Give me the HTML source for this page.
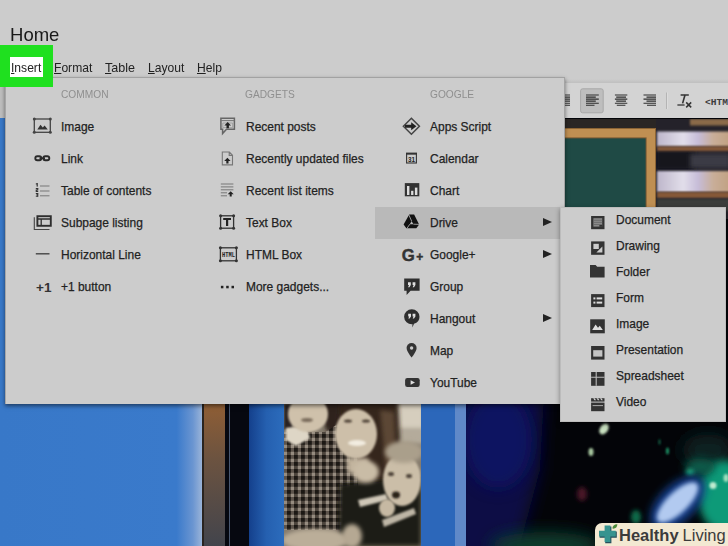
<!DOCTYPE html>
<html><head><meta charset="utf-8">
<style>
html,body{margin:0;padding:0;}
body{width:728px;height:546px;overflow:hidden;position:relative;background:#cccccc;font-family:"Liberation Sans",Arial,sans-serif;color:#222;}
#bg{position:absolute;left:0;top:0;width:728px;height:546px;}
.abs{position:absolute;}
#title{left:10px;top:23px;font-size:19px;line-height:24px;color:#1a1a1a;transform-origin:0 0;transform:scaleX(.975);}
#green{z-index:5;left:0;top:45px;width:53px;height:42px;background:#1fe01f;}
#white{z-index:6;left:10px;top:57px;width:33px;height:20px;background:#fff;}
.mi{top:60px;font-size:13px;line-height:15px;color:#222;transform-origin:0 0;transform:scaleX(.93);}
.mi u{text-decoration:underline;}
#mline{left:53px;top:77px;width:512px;height:1px;background:#a2a2a2;z-index:3;}
#panel{left:5px;top:77px;width:560px;height:327px;background:#cccccc;box-shadow:0 2px 4px rgba(0,0,0,.5);border-left:1px solid #a6a6a6;border-right:1px solid #a4a4a4;box-sizing:border-box;}
.hd{font-size:11px;color:#8f8f8f;top:88px;line-height:13px;transform-origin:0 0;transform:scaleX(.925);}
.it{font-size:13px;line-height:16px;color:#222;-webkit-text-stroke:0.25px #222;white-space:nowrap;transform-origin:0 0;transform:translateY(0.7px) scaleX(.92);}
.it.s{transform:translateY(0.2px) scaleX(.92);}
#hl{left:375px;top:207px;width:186px;height:32px;background:#b9b9b9;}
#sub{left:560px;top:207px;width:165.5px;height:214.6px;background:#cccccc;box-shadow:0 2px 5px rgba(0,0,0,.4);border:1px solid #bcbcbc;box-sizing:border-box;}
.arr{width:0;height:0;border-left:9px solid #222;border-top:4.5px solid transparent;border-bottom:4.5px solid transparent;}
#toolbar{left:565px;top:79px;width:163px;height:39px;background:linear-gradient(to bottom,#cccccc 0,#c1c1c1 3.5px,#d3d3d3 4px,#d3d3d3 100%);}
#wm{left:595px;top:523px;width:133px;height:23px;background:#f3e9d2;border-top-left-radius:7px;}
#wm span{position:absolute;top:1.5px;font-size:16.5px;line-height:20px;color:#3b3b3b;white-space:nowrap;}
svg.ic{position:absolute;overflow:visible;z-index:4;pointer-events:none;}
</style></head><body>
<svg id="bg" viewBox="0 0 728 546">
<defs>
<linearGradient id="gBlueL" x1="0" x2="1" y1="0" y2="0">
<stop offset="0" stop-color="#3878c8"/><stop offset="0.87" stop-color="#3a7acb"/><stop offset="0.95" stop-color="#6a95d1"/><stop offset="1" stop-color="#9fb7d9"/>
</linearGradient>
<linearGradient id="gBrown" gradientUnits="userSpaceOnUse" x1="0" x2="0" y1="400" y2="546">
<stop offset="0" stop-color="#925f34"/><stop offset="0.4" stop-color="#6c5340"/><stop offset="1" stop-color="#42444c"/>
</linearGradient>
<linearGradient id="gBlueM" x1="0" x2="1" y1="0" y2="0">
<stop offset="0" stop-color="#14408c"/><stop offset="0.5" stop-color="#2560b0"/><stop offset="1" stop-color="#2c6cbc"/>
</linearGradient>
<linearGradient id="gShelf" x1="0" x2="1" y1="0" y2="0">
<stop offset="0" stop-color="#bdb6ca"/><stop offset="0.35" stop-color="#e2deea"/><stop offset="0.55" stop-color="#c6bcd8"/><stop offset="0.75" stop-color="#c9ae98"/><stop offset="1" stop-color="#c0a080"/>
</linearGradient>
<pattern id="plaid" width="7" height="7" patternUnits="userSpaceOnUse">
<rect width="7" height="7" fill="#968c80"/><rect width="3.8" height="7" fill="#4c443c"/><rect width="7" height="3.8" fill="#4c443c" opacity=".8"/><rect width="3.8" height="3.8" fill="#1c1814"/>
</pattern>
<filter id="b1" x="-50%" y="-50%" width="200%" height="200%"><feGaussianBlur stdDeviation="1"/></filter>
<filter id="b2" x="-50%" y="-50%" width="200%" height="200%"><feGaussianBlur stdDeviation="2"/></filter>
<filter id="b4" x="-50%" y="-50%" width="200%" height="200%"><feGaussianBlur stdDeviation="4"/></filter>
<filter id="b8" x="-50%" y="-50%" width="200%" height="200%"><feGaussianBlur stdDeviation="8"/></filter>
<clipPath id="cFam"><rect x="284" y="118" width="137" height="428"/></clipPath>
<clipPath id="cDark"><rect x="466" y="118" width="262" height="428"/></clipPath>
<clipPath id="cTop"><rect x="565" y="119" width="163" height="100"/></clipPath>
</defs>
<!-- left blue -->
<rect x="0" y="118" width="203" height="428" fill="url(#gBlueL)"/>
<rect x="202" y="118" width="2" height="428" fill="#2a2420"/>
<rect x="204" y="118" width="21" height="428" fill="url(#gBrown)"/>
<rect x="225" y="118" width="24" height="428" fill="#060810"/>
<rect x="229" y="118" width="1" height="428" fill="#4a5870"/>
<rect x="249" y="118" width="35" height="428" fill="url(#gBlueM)"/>
<!-- family photo -->
<g clip-path="url(#cFam)">
<rect x="284" y="118" width="137" height="428" fill="#857b6d"/>
<rect x="394" y="398" width="30" height="34" fill="#d6cebe" filter="url(#b2)"/>
<rect x="396" y="428" width="28" height="16" fill="#b4ab9b" filter="url(#b2)"/>
<path d="M328 400 L398 400 L400 440 L398 474 L382 492 L350 478 L336 452 L328 425Z" fill="#35281f" filter="url(#b2)"/>
<path d="M380 410 L394 412 L396 460 L386 470Z" fill="#5c4636" filter="url(#b2)"/>
<path d="M284 404 L294 404 L292 428 L284 430Z" fill="#2a2420" filter="url(#b1)"/>
<path d="M322 400 L340 400 L338 432 L326 430Z" fill="#2e241c" filter="url(#b2)"/>
<rect x="284" y="432" width="74" height="98" fill="url(#plaid)"/>
<path d="M306 444 L338 424 L354 468 L358 530 L320 530Z" fill="url(#plaid)"/>
<path d="M286 428 L306 426 L310 438 L296 446 L286 440Z" fill="#ded6c6" filter="url(#b1)"/>
<ellipse cx="308" cy="414" rx="20" ry="18" fill="#cfc1ab" filter="url(#b1)"/>
<ellipse cx="307" cy="420" rx="6" ry="2" fill="#7a6c5c" filter="url(#b1)"/>
<ellipse cx="356" cy="434" rx="21" ry="25" fill="#cdbfa9" filter="url(#b1)"/>
<path d="M346 458 L368 458 L372 472 L348 474Z" fill="#c2b49e" filter="url(#b2)"/>
<ellipse cx="357" cy="443" rx="9" ry="3" fill="#f2ece0" filter="url(#b1)"/>
<ellipse cx="348" cy="421" rx="4" ry="1.6" fill="#4a3c30" filter="url(#b1)"/><ellipse cx="366" cy="421" rx="4" ry="1.6" fill="#4a3c30" filter="url(#b1)"/>
<path d="M340 484 L421 476 L421 546 L338 546Z" fill="#1f1c19" filter="url(#b2)"/>
<path d="M358 500 L386 494 L388 500 L360 507Z" fill="#cfc7b7" filter="url(#b1)"/>
<path d="M382 520 L414 508 L416 514 L384 527Z" fill="#bdb5a5" filter="url(#b1)"/>
<ellipse cx="402" cy="480" rx="19" ry="26" fill="#cbbea8" filter="url(#b1)"/>
<ellipse cx="404" cy="452" rx="19" ry="11" fill="#aa9f8b" filter="url(#b2)"/>
<ellipse cx="396" cy="495" rx="4" ry="3.4" fill="#2c2018" filter="url(#b1)"/>
<ellipse cx="391" cy="474" rx="3" ry="2" fill="#4a4034" filter="url(#b1)"/><ellipse cx="409" cy="476" rx="3" ry="2" fill="#4a4034" filter="url(#b1)"/>
<ellipse cx="366" cy="472" rx="13" ry="11" fill="#c9bca6" filter="url(#b2)"/>
<ellipse cx="387" cy="508" rx="8" ry="9" fill="#c6b9a3" filter="url(#b1)"/>
<ellipse cx="316" cy="540" rx="34" ry="11" fill="#bbae99" filter="url(#b2)"/>
<ellipse cx="352" cy="536" rx="10" ry="12" fill="#b5a893" filter="url(#b2)"/>
</g>
<!-- right blue -->
<rect x="421" y="118" width="34" height="428" fill="#2c67ba"/>
<rect x="455" y="118" width="11" height="428" fill="#6089c8"/>
<!-- dark scene -->
<g clip-path="url(#cDark)">
<rect x="466" y="118" width="262" height="428" fill="#030408"/>
<path d="M450 380 L545 380 L540 470 L516 560 L450 560Z" fill="#080c44" filter="url(#b8)"/>
<ellipse cx="498" cy="440" rx="34" ry="48" fill="#0b1266" filter="url(#b8)" opacity=".85"/>
<ellipse cx="545" cy="546" rx="55" ry="14" fill="#0a3e2e" filter="url(#b8)"/>
<ellipse cx="708" cy="450" rx="26" ry="16" fill="#0a2422" filter="url(#b8)"/>
<ellipse cx="724" cy="496" rx="26" ry="36" fill="#0f9a78" filter="url(#b4)"/>
<ellipse cx="700" cy="467" rx="15" ry="9" fill="#0a5a48" filter="url(#b4)"/>
<ellipse cx="690" cy="472" rx="4" ry="3" fill="#22b080" filter="url(#b2)"/>
<ellipse cx="636" cy="517" rx="5" ry="7" fill="#0a6a48" filter="url(#b2)"/>
<ellipse cx="677.5" cy="503" rx="18" ry="34" transform="rotate(46 677.5 503)" fill="#123f8c" filter="url(#b4)"/>
<ellipse cx="677.5" cy="502.5" rx="10.5" ry="27" transform="rotate(46 677.5 502.5)" fill="#b2caf0" filter="url(#b2)"/>
<ellipse cx="713" cy="485.5" rx="3.5" ry="3.5" fill="#c0ecd0" filter="url(#b1)"/>
<ellipse cx="726" cy="478" rx="2.5" ry="4" fill="#a0e0c0" filter="url(#b1)"/>
<ellipse cx="667.5" cy="451" rx="1.6" ry="3.6" fill="#1a8a60" filter="url(#b1)"/>
<ellipse cx="659.5" cy="442" rx="1.2" ry="3" fill="#145a40" filter="url(#b1)"/>
<ellipse cx="604" cy="429" rx="4" ry="6" transform="rotate(35 604 429)" fill="#c8e0c0" filter="url(#b1)"/>
<ellipse cx="591" cy="452" rx="2.5" ry="4" fill="#a8c8a0" filter="url(#b1)"/>
<ellipse cx="582" cy="494" rx="5" ry="7" fill="#4a1828" filter="url(#b2)"/>
</g>
<!-- top right: chalkboard and shelves -->
<g clip-path="url(#cTop)">
<rect x="565" y="118.6" width="163" height="100" fill="#2a2624"/>
<rect x="656" y="119" width="72" height="100" fill="#24222a"/>
<rect x="656" y="150" width="40" height="20" fill="#16161c" filter="url(#b2)"/>
<rect x="690" y="154" width="40" height="14" fill="#3a3a44" filter="url(#b2)"/>
<rect x="657" y="131.5" width="75" height="15" fill="url(#gShelf)" filter="url(#b1)"/>
<rect x="657" y="171" width="75" height="21" fill="url(#gShelf)" filter="url(#b1)"/>
<rect x="657" y="146.5" width="75" height="4.5" fill="#855838" filter="url(#b1)"/>
<rect x="657" y="192" width="75" height="6" fill="#855838" filter="url(#b1)"/>
<rect x="657" y="199" width="75" height="12" fill="#3a3c3a" filter="url(#b1)"/>
<rect x="690" y="119" width="40" height="6.5" fill="#8a6a48" filter="url(#b1)"/>
<rect x="565" y="128" width="91" height="92" fill="#8c6434"/>
<rect x="565" y="129" width="90" height="92" fill="#bf8f52"/>
<rect x="565" y="137.4" width="81.6" height="84" fill="#7a5a34"/>
<rect x="565" y="138.4" width="80.6" height="82" fill="#1f4a45"/>
</g>
</svg>
<div class="abs" id="title">Home</div>
<div class="abs" id="green"></div><div class="abs" id="white"></div>
<div class="abs mi" style="left:11px;z-index:7"><u>I</u>nsert</div>
<div class="abs mi" style="left:54.4px"><u>F</u>ormat</div>
<div class="abs mi" style="left:105px;transform:scaleX(.965)"><u>T</u>able</div>
<div class="abs mi" style="left:148px"><u>L</u>ayout</div>
<div class="abs mi" style="left:197px"><u>H</u>elp</div>
<div class="abs" id="mline"></div>
<div class="abs" id="toolbar"></div><div class="abs" style="left:0;top:83px;width:6px;height:35px;background:#bebebe"></div>
<div class="abs" id="panel"></div>
<div class="abs" id="hl"></div>
<div class="abs" id="sub"></div>
<div class="abs hd" style="left:61px">COMMON</div>
<div class="abs hd" style="left:245px">GADGETS</div>
<div class="abs hd" style="left:430px">GOOGLE</div>
<!-- col1 -->
<div class="abs it" style="left:61px;top:118px">Image</div>
<div class="abs it" style="left:61px;top:150px">Link</div>
<div class="abs it" style="left:61px;top:182px">Table of contents</div>
<div class="abs it" style="left:61px;top:214px">Subpage listing</div>
<div class="abs it" style="left:61px;top:246px">Horizontal Line</div>
<div class="abs it" style="left:61px;top:278px">+1 button</div>
<!-- col2 -->
<div class="abs it" style="left:245.8px;top:118px">Recent posts</div>
<div class="abs it" style="left:245.8px;top:150px">Recently updated files</div>
<div class="abs it" style="left:245.8px;top:182px">Recent list items</div>
<div class="abs it" style="left:245.8px;top:214px">Text Box</div>
<div class="abs it" style="left:245.8px;top:246px">HTML Box</div>
<div class="abs it" style="left:245.8px;top:278px">More gadgets...</div>
<!-- col3 -->
<div class="abs it" style="left:430px;top:118px">Apps Script</div>
<div class="abs it" style="left:430px;top:150px">Calendar</div>
<div class="abs it" style="left:430px;top:182px">Chart</div>
<div class="abs it" style="left:430px;top:214px">Drive</div>
<div class="abs it" style="left:430px;top:246px">Google+</div>
<div class="abs it" style="left:430px;top:278px">Group</div>
<div class="abs it" style="left:430px;top:310px">Hangout</div>
<div class="abs it" style="left:430px;top:342px">Map</div>
<div class="abs it" style="left:430px;top:374px">YouTube</div>
<div class="abs arr" style="left:543px;top:218px"></div>
<div class="abs arr" style="left:543px;top:250px"></div>
<div class="abs arr" style="left:543px;top:314px"></div>
<!-- submenu -->
<div class="abs it s" style="left:616px;top:212px">Document</div>
<div class="abs it s" style="left:616px;top:238px">Drawing</div>
<div class="abs it s" style="left:616px;top:264px">Folder</div>
<div class="abs it s" style="left:616px;top:290px">Form</div>
<div class="abs it s" style="left:616px;top:316px">Image</div>
<div class="abs it s" style="left:616px;top:342px">Presentation</div>
<div class="abs it s" style="left:616px;top:368px">Spreadsheet</div>
<div class="abs it s" style="left:616px;top:394px">Video</div>

<svg class="ic" id="icons" style="left:0;top:0" width="728" height="546" viewBox="0 0 728 546">
<g id="toolbar-icons">
<rect x="580.6" y="88.8" width="22.6" height="24" rx="2" fill="#bebebe" stroke="#a8a8a8" stroke-width="1"/>
<g stroke="#2e2e2e" stroke-width="1.15">
<path d="M565.0 95.00 H570.0 M565.0 97.05 H570.0 M565.0 99.10 H570.0 M565.0 101.15 H570.0 M565.0 103.20 H570.0 M565.0 105.25 H570.0"/>
<path d="M586.0 95.00 H598.8 M586.0 97.05 H595.8 M586.0 99.10 H598.8 M586.0 101.15 H595.8 M586.0 103.20 H598.8 M586.0 105.25 H594.5"/>
<path d="M614.9 95.00 H627.3 M616.2 97.05 H626.0 M614.9 99.10 H627.3 M616.2 101.15 H626.0 M614.9 103.20 H627.3 M616.8 105.25 H625.4"/>
<path d="M643.5 95.00 H656.0 M646.5 97.05 H656.0 M643.5 99.10 H656.0 M646.5 101.15 H656.0 M643.5 103.20 H656.0 M647.0 105.25 H656.0"/>
</g>
<path d="M666.5 92.5 V109" stroke="#b4b4b4" stroke-width="1"/><path d="M667.5 92.5 V109" stroke="#dcdcdc" stroke-width="1"/>
<g stroke="#333" fill="none">
<path d="M680.6 95 H688.8" stroke-width="1.5"/><path d="M685 95 L682.6 103.4" stroke-width="1.6"/><path d="M677.4 105 H684.6" stroke-width="1.3"/>
<path d="M686.2 102.4 L691.2 107.4 M691.2 102.4 L686.2 107.4" stroke-width="1.5"/>
</g>
<text x="705" y="105" font-family="Liberation Mono, monospace" font-weight="bold" font-size="8.5" fill="#3c3c3c" textLength="34.5" lengthAdjust="spacingAndGlyphs">&lt;HTML&gt;</text>
</g>
<g id="wm-icon">
<path d="M605.2 526.6 H611.4 V531.6 H616.8 V537.8 H611.4 V543.2 H605.2 V537.8 H599.6 V531.6 H605.2Z" fill="#274f5c"/>
<path d="M604.6 525.6 H610.4 V530.8 H615.8 V536.6 H610.4 V542 H604.6 V536.6 H599 V530.8 H604.6Z" fill="#37938f"/>
<path d="M612.4 528.6 C612.4 525.6 614.6 524 617.4 524.2 C617.2 527 615.6 529 612.4 528.6Z" fill="#4a8a3a"/>
</g>
<!-- col 1 -->
<g id="i-image" stroke="#444" fill="none" stroke-width="1.3">
<rect x="34.3" y="119" width="16" height="13.3"/>
<g fill="#444" stroke="none"><circle cx="34.3" cy="119" r="1.5"/><circle cx="50.3" cy="119" r="1.5"/><circle cx="34.3" cy="132.3" r="1.5"/><circle cx="50.3" cy="132.3" r="1.5"/>
<path d="M37.3 129.6 L40.5 124.8 L42.8 127.6 L44.6 125.6 L47.8 129.6Z" fill="#333"/></g>
</g>
<g id="i-link" stroke="#2a2a2a" fill="none" stroke-width="1.9">
<rect x="35.3" y="156.2" width="6" height="4" rx="2"/><rect x="43.3" y="156.2" width="6" height="4" rx="2"/>
<path d="M39.5 158.2 H45" stroke-width="1.6"/>
</g>
<g id="i-toc">
<g stroke="#777" stroke-width="1"><path d="M40 186 H49.5 M40 191 H49.5 M40 195.8 H49.5"/></g>
<g fill="#333"><rect x="36.6" y="183" width="1.2" height="3.6"/><rect x="35.8" y="183.4" width="1.2" height="1"/>
<rect x="35.8" y="188" width="2.4" height="1"/><rect x="37.2" y="188" width="1" height="2"/><rect x="35.8" y="189.6" width="2.4" height="1"/><rect x="35.8" y="189.6" width="1" height="2"/><rect x="35.8" y="191" width="2.4" height="1"/>
<rect x="35.8" y="193" width="2.4" height="1"/><rect x="37.2" y="193" width="1" height="3.6"/><rect x="36.2" y="194.4" width="2" height="0.9"/><rect x="35.8" y="195.7" width="2.4" height="1"/></g>
</g>
<g id="i-subpage" fill="none">
<path d="M34.3 217.3 V229.5 H49.5" stroke="#444" stroke-width="1.1"/>
<rect x="37.4" y="216.2" width="13.4" height="9.6" stroke="#2e2e2e" stroke-width="1.9"/>
<path d="M37.4 219 H50.8 M41.2 219 V225.8" stroke="#2e2e2e" stroke-width="1.3"/>
</g>
<path id="i-hline" d="M35.8 253.8 H49.5" stroke="#444" stroke-width="1.4"/>
<text id="i-plus1" x="36" y="291.6" font-family="Liberation Sans, Arial, sans-serif" font-weight="bold" font-size="13.5" fill="#333" textLength="15.5" lengthAdjust="spacingAndGlyphs">+1</text>
<!-- col 2 -->
<g id="i-posts">
<path d="M220.9 118.3 H234.4 V129.3 H226.5 L222.6 133.6 V129.3 H220.9Z" fill="none" stroke="#666" stroke-width="1.5"/>
<path d="M221 120.6 H234.4" stroke="#777" stroke-width="1"/>
<path d="M222.8 123 H232.6 V127.6 H222.8Z" fill="none" stroke="#999" stroke-width=".8"/>
<path d="M227.7 122 L231 125.4 H228.9 V128.2 H226.5 V125.4 H224.4Z" fill="#222"/>
</g>
<g id="i-files">
<path d="M222.3 152 H229.4 L232.5 155.2 V164.9 H222.3Z M229.2 152 V155.4 H232.5" fill="none" stroke="#777" stroke-width="1.1"/>
<path d="M227.4 157.8 L230.6 161 H228.5 V163.6 H226.3 V161 H224.2Z" fill="#222"/>
</g>
<g id="i-list">
<path d="M220.8 184 H233.4 M220.8 186.9 H233.4 M220.8 189.8 H233.4 M220.8 192.8 H227 M220.8 195.8 H227" stroke="#777" stroke-width="1"/>
<path d="M230.7 191.2 L233.7 194.3 H231.7 V196.4 H229.7 V194.3 H227.7Z" fill="#222"/>
</g>
<g id="i-textbox">
<rect x="220.6" y="215.8" width="13" height="12.4" fill="none" stroke="#333" stroke-width="1.3"/>
<g fill="#333"><circle cx="220.6" cy="215.8" r="1.5"/><circle cx="233.6" cy="215.8" r="1.5"/><circle cx="220.6" cy="228.2" r="1.5"/><circle cx="233.6" cy="228.2" r="1.5"/>
<path d="M223.2 217.9 H231 V219.9 H228.2 V226 H226 V219.9 H223.2Z" fill="#222"/></g>
</g>
<g id="i-htmlbox">
<rect x="220.4" y="247.8" width="16" height="13" fill="none" stroke="#333" stroke-width="1.3"/>
<g fill="#333"><circle cx="220.4" cy="247.8" r="1.5"/><circle cx="236.4" cy="247.8" r="1.5"/><circle cx="220.4" cy="260.8" r="1.5"/><circle cx="236.4" cy="260.8" r="1.5"/></g>
<text x="222" y="257" font-family="Liberation Mono, monospace" font-weight="bold" font-size="6.5" fill="#222" textLength="13" lengthAdjust="spacingAndGlyphs">HTML</text>
</g>
<g id="i-more" fill="#222"><rect x="220.9" y="285.8" width="2.5" height="2.5"/><rect x="226.2" y="285.8" width="2.5" height="2.5"/><rect x="231.5" y="285.8" width="2.5" height="2.5"/></g>
<!-- col 3 -->
<g id="i-script">
<path d="M411.4 118.2 L419.4 126.2 L411.4 134.2 L403.4 126.2Z" fill="none" stroke="#444" stroke-width="1.5"/>
<path d="M405 124.7 H411.2 V122.2 L416.4 126.2 L411.2 130.2 V127.7 H405Z" fill="#222"/>
</g>
<g id="i-cal">
<rect x="406.6" y="153.6" width="9.8" height="9.4" fill="none" stroke="#333" stroke-width="1.1"/>
<rect x="406" y="152.6" width="11" height="2" fill="#333"/>
<text x="408" y="161.6" font-family="Liberation Sans, Arial, sans-serif" font-weight="bold" font-size="6.5" fill="#222" textLength="7" lengthAdjust="spacingAndGlyphs">31</text>
</g>
<g id="i-chart">
<rect x="404.8" y="183.1" width="14.5" height="13.2" fill="#333"/>
<rect x="407" y="186" width="2.4" height="9" fill="#ddd"/><rect x="411.1" y="190.8" width="2.3" height="4.2" fill="#ddd"/><rect x="414.9" y="187.6" width="2.5" height="7.4" fill="#ddd"/>
</g>
<g id="i-drive">
<path d="M409.2 214.4 H414.1 L419.1 224.4 L416.3 228.3 H406.4 L403.6 224.4Z" fill="#111"/>
<path d="M411.6 221 L413.4 224.2 H409.8Z" fill="#b9b9b9"/>
<path d="M409.8 224.2 L407 228.3 M413.4 224.2 L419.1 224.4 M411.6 221 L408.6 214.4" stroke="#b9b9b9" stroke-width=".8" fill="none"/>
</g>
<g id="i-gplus" fill="#333" stroke="#333" stroke-width=".45" font-family="Liberation Sans, Arial, sans-serif" font-weight="bold">
<text x="401.8" y="261.3" font-size="16.5" textLength="13" lengthAdjust="spacingAndGlyphs">G</text>
<text x="416.3" y="260.6" font-size="12" textLength="7" lengthAdjust="spacingAndGlyphs">+</text>
</g>
<g id="i-group">
<path d="M404.2 278.5 H419.6 V290.8 H410.6 L406.6 295 V290.8 H404.2Z" fill="#2e2e2e"/>
<g fill="#e0e0e0"><path d="M408 282.2 h2.8 v2.8 l-1.4 2.2 h-1.3 l0.9-2.2 h-1Z"/><path d="M412.6 282.2 h2.8 v2.8 l-1.4 2.2 h-1.3 l0.9-2.2 h-1Z"/></g>
</g>
<g id="i-hangout">
<path d="M411.8 309.3 a7.7 7.4 0 0 1 7.7 7.4 a7.7 7.4 0 0 1 -5.5 7.1 L412.4 327.4 V324.1 a7.7 7.4 0 0 1 -8.3 -7.4 a7.7 7.4 0 0 1 7.7 -7.4Z" fill="#2e2e2e"/>
<g fill="#e0e0e0"><path d="M408.2 313.8 h2.8 v2.7 l-1.4 2.1 h-1.3 l0.9-2.1 h-1Z"/><path d="M412.6 313.8 h2.8 v2.7 l-1.4 2.1 h-1.3 l0.9-2.1 h-1Z"/></g>
</g>
<g id="i-map">
<path d="M411.6 343 a5 5 0 0 1 5 5 c0 3.6 -5 9.5 -5 9.5 s-5 -5.9 -5 -9.5 a5 5 0 0 1 5 -5Z" fill="#333"/>
<circle cx="411.6" cy="348" r="1.7" fill="#ccc"/>
</g>
<g id="i-yt">
<rect x="405.1" y="378" width="14.6" height="9" rx="2.2" fill="#333"/>
<path d="M410.6 380.2 L415 382.5 L410.6 384.8Z" fill="#e0e0e0"/>
</g>
<!-- submenu -->
<g id="s-doc"><rect x="591.1" y="216" width="13.4" height="13.2" fill="#333"/><rect x="593.4" y="218.2" width="8.8" height="8.4" fill="#8a8a8a"/><path d="M593.4 220.3 H602.2 M593.4 222.4 H602.2 M593.4 224.5 H602.2" stroke="#666" stroke-width=".8"/><rect x="599.4" y="225" width="2.8" height="1.8" fill="#333"/></g>
<g id="s-draw"><rect x="591.1" y="241.4" width="13.4" height="13.4" fill="#333"/><rect x="593.4" y="243.8" width="5.4" height="5.2" fill="#ccc"/><path d="M602.4 246.6 V252.6 H596.4Z" fill="#ccc"/></g>
<g id="s-folder"><path d="M590 265 H595.6 L597.2 266.8 H604.6 V277.6 H590Z" fill="#333"/></g>
<g id="s-form"><rect x="591.1" y="294.1" width="13.4" height="13" fill="#333"/><g fill="#ddd"><rect x="593.4" y="297.4" width="2" height="2"/><rect x="596.6" y="297.4" width="5.6" height="2"/><rect x="593.4" y="301.6" width="2" height="2"/><rect x="596.6" y="301.6" width="5.6" height="2"/></g></g>
<g id="s-image"><rect x="590.2" y="319.3" width="14.6" height="14" fill="#333"/><path d="M592.2 330 L595.6 324.6 L598 327.8 L599.8 325.8 L602.8 330Z" fill="#ddd"/></g>
<g id="s-pres"><rect x="591.1" y="346" width="13.4" height="13.6" fill="#333"/><rect x="593.2" y="350.2" width="9.2" height="6.4" fill="#c4c4c4"/></g>
<g id="s-sheet"><rect x="591.1" y="372" width="13.4" height="13.8" fill="#333"/><path d="M596.2 372 V385.8 M591.1 377.2 H604.5" stroke="#bbb" stroke-width="1.1"/></g>
<g id="s-video"><path d="M591.1 398.2 H604.5 V401.6 H591.1Z" fill="#333"/><path d="M593.2 398.2 l1.6 0 l1.2 2 l-1.6 0Z M596.6 398.2 l1.6 0 l1.2 2 l-1.6 0Z M600 398.2 l1.6 0 l1.2 2 l-1.6 0Z" fill="#ccc"/><rect x="591.1" y="402.6" width="13.4" height="8.6" fill="#333"/><path d="M592.6 405.6 H603" stroke="#aaa" stroke-width="1"/></g>
</svg>
<div class="abs" id="wm"><span style="left:24px;font-weight:bold">Healthy</span><span style="left:87.6px">Living</span></div>
</body></html>
